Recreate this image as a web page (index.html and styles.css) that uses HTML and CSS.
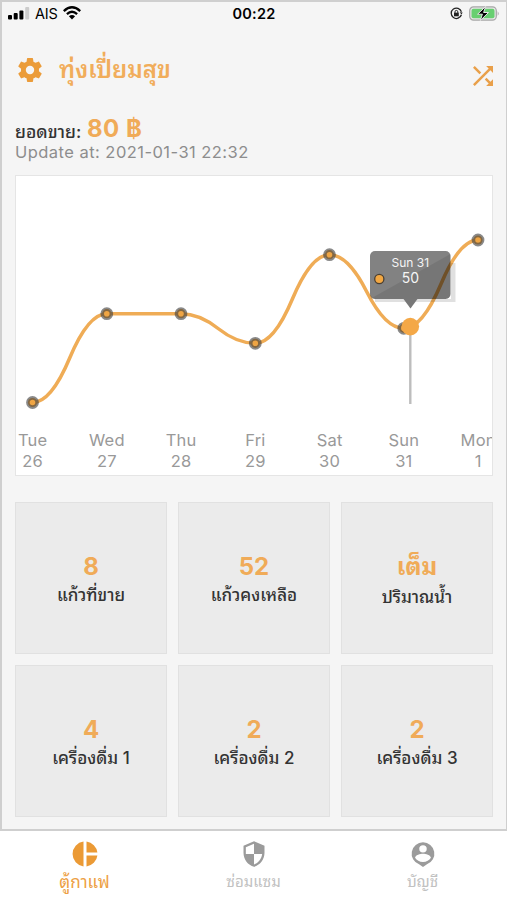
FILE: index.html
```html
<!DOCTYPE html>
<html lang="th">
<head>
<meta charset="utf-8">
<title>ทุ่งเปี่ยมสุข</title>
<link rel="stylesheet" href="styles.css">
</head>
<body>
<main class="screen">
  <div class="status">
    <div class="status-left">
      <svg width="22" height="14" viewBox="0 0 22 14"><rect x="0" y="9" width="4" height="4.4" rx="1"/><rect x="5.7" y="7" width="4" height="6.4" rx="1"/><rect x="11.4" y="4.5" width="4" height="8.9" rx="1"/><rect x="17.2" y="1" width="4" height="12.4" rx="1" fill="#ccc"/></svg>
      <span class="carrier">AIS</span>
      <svg width="18" height="14" viewBox="0 0 18 14" fill="none" stroke="#000" stroke-width="2.3"><path d="M.8 5.1Q9-2.6 17.2 5.1M3.9 8.2Q9 3.4 14.1 8.2"/><path d="M9 13.4 5.9 10.3Q9 7.7 12.1 10.3Z" fill="#000" stroke="none"/></svg>
    </div>
    <span class="clock">00:22</span>
    <div class="status-right">
      <svg width="13" height="13" viewBox="0 0 13 13" fill="none" stroke="#222" stroke-width="1.3"><path d="M11.4 7.8A5.2 5.2 0 1 1 11.4 4.8"/><path d="m9.7 5.3 3 .1-1.2 2.2z" fill="#222" stroke="none"/><rect x="4" y="5.7" width="4.8" height="3.6" fill="#222" stroke="none"/><path d="M5 6V4.8a1.4 1.4 0 0 1 2.8 0V6" stroke-width="1"/></svg>
      <svg width="31" height="15" viewBox="0 0 31 15"><rect x=".7" y=".9" width="26.6" height="13.2" rx="3.8" fill="#e6e6e6" stroke="#a6a6a6" stroke-width="1.2"/><rect x="2.5" y="2.7" width="23" height="9.6" rx="2" fill="#67cf70"/><path d="M28.7 5.2q2 2.3 0 4.6z" fill="#a6a6a6"/><path d="M16.7.4 8.6 8.2h4.8L11.3 14.5 19.5 6.5h-4.9z" stroke="#e6e6e6" stroke-width="1"/></svg>
    </div>
  </div>

  <header class="header">
    <svg class="gear" viewBox="2 2 20 20"><path d="M19.43 12.98c.04-.32.07-.64.07-.98s-.03-.66-.07-.98l2.11-1.65c.19-.15.24-.42.12-.64l-2-3.46c-.12-.22-.39-.3-.61-.22l-2.49 1c-.52-.4-1.08-.73-1.69-.98l-.38-2.65C14.46 2.18 14.25 2 14 2h-4c-.25 0-.46.18-.49.42l-.38 2.65c-.61.25-1.17.59-1.69.98l-2.49-1c-.23-.09-.49 0-.61.22l-2 3.46c-.13.22-.07.49.12.64l2.11 1.65c-.04.32-.07.65-.07.98s.03.66.07.98l-2.11 1.65c-.19.15-.24.42-.12.64l2 3.46c.12.22.39.3.61.22l2.49-1c.52.4 1.08.73 1.69.98l.38 2.65c.03.24.24.42.49.42h4c.25 0 .46-.18.49-.42l.38-2.65c.61-.25 1.17-.59 1.69-.98l2.49 1c.23.09.49 0 .61-.22l2-3.46c.12-.22.07-.49-.12-.64l-2.11-1.65zM12 15.500A3.500 3.500 0 1 1 12 8.500a3.500 3.500 0 0 1 0 7z"/></svg>
    <h1 class="title">ทุ่งเปี่ยมสุข</h1>
    <svg class="shuffle" viewBox="4 4 16 16"><path d="M10.59 9.17 5.41 4 4 5.41l5.17 5.17 1.42-1.41zM14.5 4l2.04 2.04L4 18.59 5.41 20 17.96 7.46 20 9.500V4h-5.500zm.33 9.410-1.41 1.410 3.130 3.130L14.500 20H20v-5.500l-2.040 2.040-3.130-3.130z"/></svg>
  </header>

  <div class="sales"><span class="sales-label">ยอดขาย:</span><span class="sales-value">80 ฿</span></div>
  <div class="updated">Update at: 2021-01-31 22:32</div>

  <section class="chart">
    <svg class="plot" width="477" height="240" viewBox="16 176 477 240">
      <path class="line" d="M32.500 402.500Q51.100 402.500 69.700 358Q88.200 313.700 106.800 313.700L181 313.700Q199.600 313.700 218.100 328.500Q236.700 343.300 255.300 343.300Q273.800 343.300 292.400 299Q311 254.700 329.500 254.700Q348.100 254.700 366.600 291.500Q385.200 328.300 403.800 328.300Q422.300 328.300 441 284Q459.500 240 478 240"/>
      <g class="dots"><circle cx="32.500" cy="402.500" r="4.600"/><circle cx="106.800" cy="313.700" r="4.600"/><circle cx="181" cy="313.700" r="4.600"/><circle cx="255.300" cy="343.300" r="4.600"/><circle cx="329.500" cy="254.700" r="4.600"/><circle cx="403.800" cy="328.300" r="4.600"/><circle cx="478" cy="240" r="4.600"/></g>
      <path d="M410.300 326V404" stroke="#bdbdbd" stroke-width="2.400"/>
      <path d="M451 263h4.500v39H375v-3h76z" fill="#000" opacity=".12"/>
      <rect x="370" y="251" width="80.500" height="48" rx="5" fill="#000" opacity=".49"/>
      <path d="M370 299 450.500 254V294q0 5-5 5z" fill="#000" opacity=".09"/>
      <path d="M403.500 299h14l-7 9.500z" fill="#777"/>
      <circle cx="379.300" cy="279" r="4.600" fill="#f2a742" stroke="#4c4032" stroke-width="1.300"/>
      <circle cx="410.300" cy="326.600" r="8.800" fill="#f4a847"/>
      <text class="tip-day" x="410.300" y="267">Sun 31</text>
      <text class="tip-value" x="410.300" y="283.300">50</text>
    </svg>
    <div class="days">
      <div>Tue<br>26</div><div>Wed<br>27</div><div>Thu<br>28</div><div>Fri<br>29</div><div>Sat<br>30</div><div>Sun<br>31</div><div>Mon<br>1</div>
    </div>
  </section>

  <section class="cards">
    <div class="card"><b>8</b><span>แก้วที่ขาย</span></div>
    <div class="card"><b>52</b><span>แก้วคงเหลือ</span></div>
    <div class="card thai"><b>เต็ม</b><span>ปริมาณน้ำ</span></div>
    <div class="card"><b>4</b><span>เครื่องดื่ม 1</span></div>
    <div class="card"><b>2</b><span>เครื่องดื่ม 2</span></div>
    <div class="card"><b>2</b><span>เครื่องดื่ม 3</span></div>
  </section>
</main>

<nav class="tabs">
  <div class="tab active">
    <svg viewBox="0 0 28 28"><path d="M12.500 1.600v24.800A12.500 12.500 0 0 1 12.500 1.600zM15.500 1.600A12.500 12.500 0 0 1 26.400 12.500H15.500zM15.500 15.500h10.900A12.500 12.500 0 0 1 15.500 26.400z"/></svg>
    <span>ตู้กาแฟ</span>
  </div>
  <div class="tab">
    <svg viewBox="0 0 24 24"><path d="M12 1 3 5v6c0 5.550 3.840 10.740 9 12 5.160-1.260 9-6.450 9-12V5l-9-4zm0 10.990h7c-.53 4.120-3.280 7.790-7 8.940V12H5V6.300l7-3.110v8.800z"/></svg>
    <span>ซ่อมแซม</span>
  </div>
  <div class="tab">
    <svg viewBox="0 0 24 24"><path d="M12 2a9.700 9.700 0 0 0-3.400 18.800L12 23.200l3.400-2.400A9.700 9.700 0 0 0 12 2zm0 2.400a3.200 3.200 0 1 1 0 6.400 3.200 3.200 0 0 1 0-6.400zm0 14.500c-3 0-5.400-1.600-6.800-3.700.1-2.300 4.600-3.500 6.800-3.500s6.700 1.200 6.800 3.500c-1.400 2.100-3.800 3.700-6.800 3.700z"/></svg>
    <span>บัญชี</span>
  </div>
</nav>
</body>
</html>
```
FILE: styles.css
```css
* { box-sizing: border-box; }
body {
  margin: 0;
  width: 507px;
  height: 900px;
  overflow: hidden;
  background: #fff;
  font-family: Inter, "Noto Sans Thai Looped", Loma, Garuda, Waree, Umpush, sans-serif;
  color: #333;
}
svg { display: block; flex: none; }
.screen {
  height: 831px;
  padding: 0 13px;
  background: #f5f5f5;
  border: 2px solid #cfcfcf;
  border-right-width: 1px;
}
.status {
  display: grid;
  grid-template-columns: 1fr auto 1fr;
  align-items: center;
  height: 22px;
  margin: 0 -7px 2px -7px;
  color: #000;
}
.status-left, .status-right { display: flex; align-items: center; }
.status-left { gap: 5px; }
.status-right { justify-content: flex-end; gap: 6px; }
.carrier { font-size: 14.500px; letter-spacing: -.2px; }
.clock { font-size: 14.500px; font-weight: 600; letter-spacing: .2px; }
.header {
  display: flex;
  align-items: center;
  height: 88px;
  color: #eda044;
}
.gear { width: 24px; height: 24px; margin: -1px 0 0 3px; fill: #eb9c3a; }
.title { margin: 0 auto 0 17px; font-size: 24px; font-weight: 600; line-height: 40px; color: #f1ad5b; white-space: nowrap; }
.shuffle { width: 20px; height: 20px; margin: 12px 0 0 0; fill: #e9a04a; }
.sales { display: flex; align-items: center; height: 28px; white-space: nowrap; }
.sales-label { font-size: 17.500px; font-weight: 500; width: 72px; padding-top: 3px; }
.sales-value { font-size: 24px; font-weight: 700; letter-spacing: .5px; color: #f0ab58; }
.updated { height: 33px; font-size: 16.500px; line-height: 21px; letter-spacing: .46px; color: #8d8d8d; white-space: nowrap; }
.chart {
  height: 301px;
  background: #fff;
  border: 1px solid #e5e5e5;
  overflow: hidden;
}
.line { fill: none; stroke: #efac56; stroke-width: 3.500; }
.dots circle { fill: #efa544; stroke: rgba(65, 65, 65, .62); stroke-width: 3.600; }
.tip-day, .tip-value { fill: #f5f5f5; text-anchor: middle; }
.tip-day { font-size: 12px; }
.tip-value { font-size: 14px; }
.days {
  display: grid;
  grid-template-columns: repeat(7, 74.250px);
  margin: 14px 0 0 -20.500px;
  font-size: 16.500px;
  line-height: 21px;
  letter-spacing: .2px;
  text-align: center;
  color: #999;
}
.cards {
  display: grid;
  grid-template-columns: repeat(3, 152px);
  grid-auto-rows: 152px;
  gap: 11px;
  margin-top: 26px;
}
.card {
  display: flex;
  flex-direction: column;
  align-items: center;
  padding-top: 50px;
  background: #ebebeb;
  border: 1px solid #e1e1e1;
  white-space: nowrap;
}
.card b { height: 28px; font-size: 24px; line-height: 28px; font-weight: 700; color: #f0ab58; }
.card span { font-size: 17px; line-height: 28px; font-weight: 500; }
.thai b { height: 30px; }
.tabs { display: flex; height: 69px; }
.tab {
  width: 169px;
  display: flex;
  flex-direction: column;
  align-items: center;
  padding-top: 9px;
  font-size: 15px;
  line-height: 28px;
  color: #c1c1c1;
}
.tab svg { width: 28px; height: 28px; fill: #9b9b9b; }
.tab.active { color: #eda044; font-size: 17px; }
.tab.active svg { fill: #eb9a35; }
```
